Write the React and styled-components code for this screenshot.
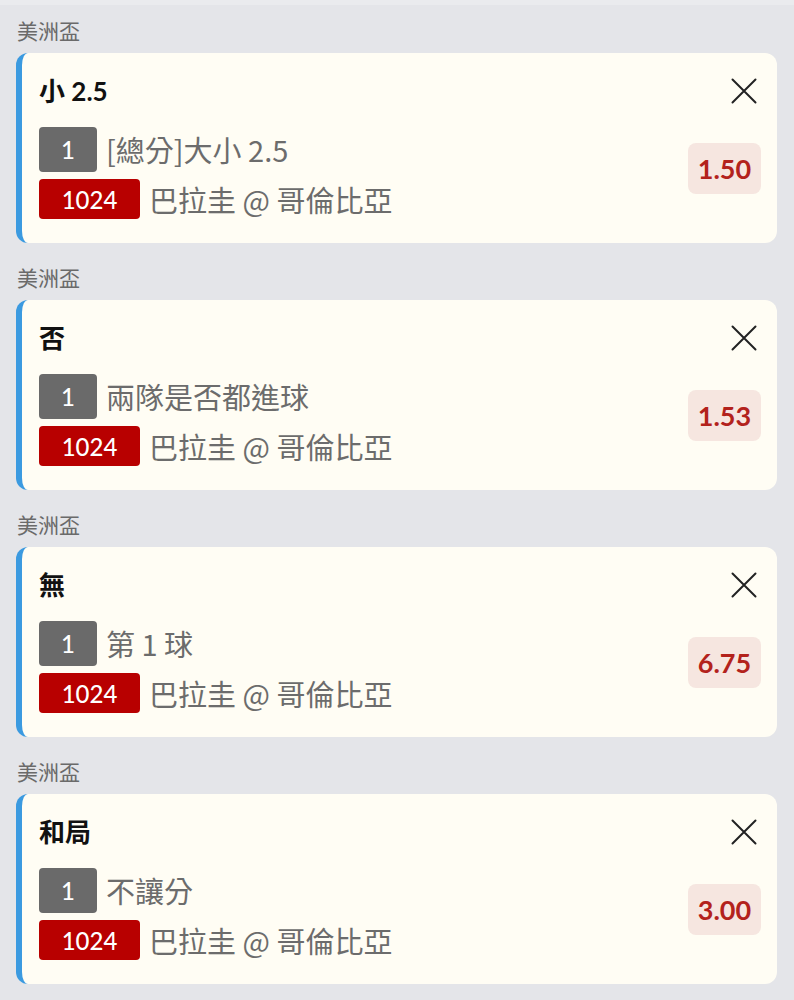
import * as React from "react";
import styled, { createGlobalStyle } from "styled-components";

const GlobalStyle = createGlobalStyle`
  html, body {
    margin: 0;
    padding: 0;
    background: #e4e5e9;
  }
  body {
    font-family: Lato, "Noto Sans CJK TC", sans-serif;
  }
`;

const Page = styled.div`
  width: 794px;
  min-height: 1000px;
  background: #e4e5e9;
  display: flex;
  flex-direction: column;
`;

const TopEdge = styled.div`
  height: 5px;
  background: #eaebee;
`;

const List = styled.div`
  display: flex;
  flex-direction: column;
  padding: 0 17px 0 16px;
`;

const League = styled.div`
  font-family: "Noto Sans CJK TC", sans-serif;
  font-size: 21px;
  line-height: 24px;
  color: #6a6a6a;
  padding: ${({ first }) => (first ? "13px" : "22px")} 0 11px 1px;
`;

const Card = styled.div`
  display: grid;
  grid-template-columns: 1fr auto;
  grid-template-areas:
    "title close"
    "body odds";
  background: #fffdf4;
  border-left: 6px solid #3b9ae0;
  border-radius: 12px;
  padding: 23px 16px 24px 17px;
  height: 190px;
  box-sizing: border-box;
`;

const Title = styled.div`
  grid-area: title;
  font-size: 26px;
  font-weight: 700;
  line-height: 30px;
  color: #111;
`;

const Close = styled.button`
  grid-area: close;
  align-self: center;
  justify-self: end;
  border: 0;
  background: none;
  padding: 0;
  width: 26px;
  height: 26px;
  margin-right: 4px;
  display: flex;
  align-items: center;
  justify-content: center;
  color: #222;
`;

const Body = styled.div`
  grid-area: body;
  display: flex;
  flex-direction: column;
  gap: 7px;
  margin-top: 21px;
`;

const Row = styled.div`
  display: flex;
  align-items: center;
  gap: 9px;
`;

const Tag = styled.span`
  display: inline-flex;
  align-items: center;
  justify-content: center;
  box-sizing: border-box;
  height: ${({ red }) => (red ? "40px" : "45px")};
  min-width: ${({ red }) => (red ? "101px" : "58px")};
  border-radius: 4px;
  background: ${({ red }) => (red ? "#b80000" : "#6a6a6a")};
  color: #fff;
  font-family: Lato, sans-serif;
  font-size: 24px;
  font-weight: 500;
`;

const RowText = styled.span`
  font-family: "Noto Sans CJK TC", sans-serif;
  font-size: 29px;
  color: #6c6c6c;
  line-height: 1;
`;

const Odds = styled.div`
  grid-area: odds;
  align-self: center;
  margin-top: 11px;
  width: 73px;
  height: 51px;
  border-radius: 8px;
  background: #f6e6e0;
  color: #b3221c;
  font-family: Lato, sans-serif;
  font-size: 27px;
  font-weight: 700;
  display: flex;
  align-items: center;
  justify-content: center;
`;

const bets = [
  { title: "小 2.5", market: "[總分]大小 2.5", odds: "1.50" },
  { title: "否", market: "兩隊是否都進球", odds: "1.53" },
  { title: "無", market: "第 1 球", odds: "6.75" },
  { title: "和局", market: "不讓分", odds: "3.00" },
];

const CloseIcon = () => (
  <svg width="26" height="26" viewBox="0 0 26 26" fill="none">
    <path d="M1.5 1.5 L24.5 24.5 M24.5 1.5 L1.5 24.5" stroke="currentColor" strokeWidth="2" strokeLinecap="round" />
  </svg>
);

export default function App() {
  return (
    <Page>
      <GlobalStyle />
      <TopEdge />
      <List>
        {bets.map((bet, index) => (
          <React.Fragment key={`bet${index}`}>
            <League first={index === 0}>美洲盃</League>
            <Card>
              <Title>{bet.title}</Title>
              <Close aria-label="remove">
                <CloseIcon />
              </Close>
              <Body>
                <Row>
                  <Tag>1</Tag>
                  <RowText>{bet.market}</RowText>
                </Row>
                <Row>
                  <Tag red>1024</Tag>
                  <RowText>巴拉圭 @ 哥倫比亞</RowText>
                </Row>
              </Body>
              <Odds>{bet.odds}</Odds>
            </Card>
          </React.Fragment>
        ))}
      </List>
    </Page>
  );
}
